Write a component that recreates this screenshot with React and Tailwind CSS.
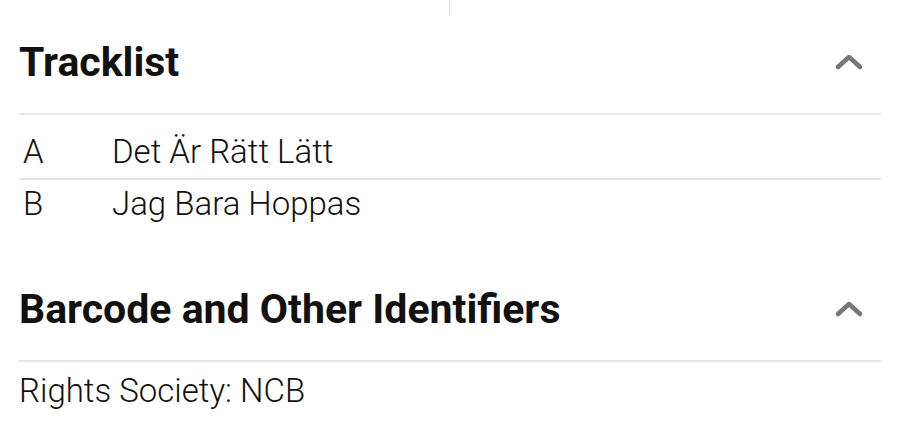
const tracks = [
  { pos: 'A', title: 'Det Är Rätt Lätt' },
  { pos: 'B', title: 'Jag Bara Hoppas' },
];

const Chevron = () => (
  <svg width="30" height="20" viewBox="0 0 30 20" className="mr-[17px]">
    <path d="M4 15 L15 5 L26 15" fill="none" stroke="#777" strokeWidth="4.5" strokeLinecap="round" strokeLinejoin="round" />
  </svg>
);

const SectionHeader = ({ title }) => (
  <div className="flex items-center justify-between h-[100px] pb-[4px] border-b-2 border-[#e6e6e6]">
    <h2 className="text-[41px] font-bold text-[#111] leading-none">{title}</h2>
    <Chevron />
  </div>
);

const App = () => {
  return (
    <div className="w-[900px] h-[446px] bg-white overflow-hidden" style={{ fontFamily: 'Roboto, "Liberation Sans", sans-serif' }}>
      <div className="h-[15px]">
        <div className="ml-[449px] w-[1px] h-full bg-[#dcdcdc]" />
      </div>

      <div className="px-[19px]">
        {/* Tracklist */}
        <SectionHeader title="Tracklist" />
        <div className="mt-[13px]">
          {tracks.map((t, i) => (
            <div
              key={t.pos}
              className={
                'flex pl-[4px] pt-[7px] pb-[10px] text-[33px] leading-[33px] font-light text-[#111] ' +
                (i < tracks.length - 1 ? 'border-b-2 border-[#e6e6e6]' : '')
              }
            >
              <span className="w-[89px]">{t.pos}</span>
              <span>{t.title}</span>
            </div>
          ))}
        </div>

        {/* Barcode */}
        <div className="mt-[32px]">
          <SectionHeader title="Barcode and Other Identifiers" />
        </div>
        <div className="pt-[12px] text-[33px] leading-[33px] font-light text-[#111]">Rights Society: NCB</div>
      </div>
    </div>
  );
};

export default App;
